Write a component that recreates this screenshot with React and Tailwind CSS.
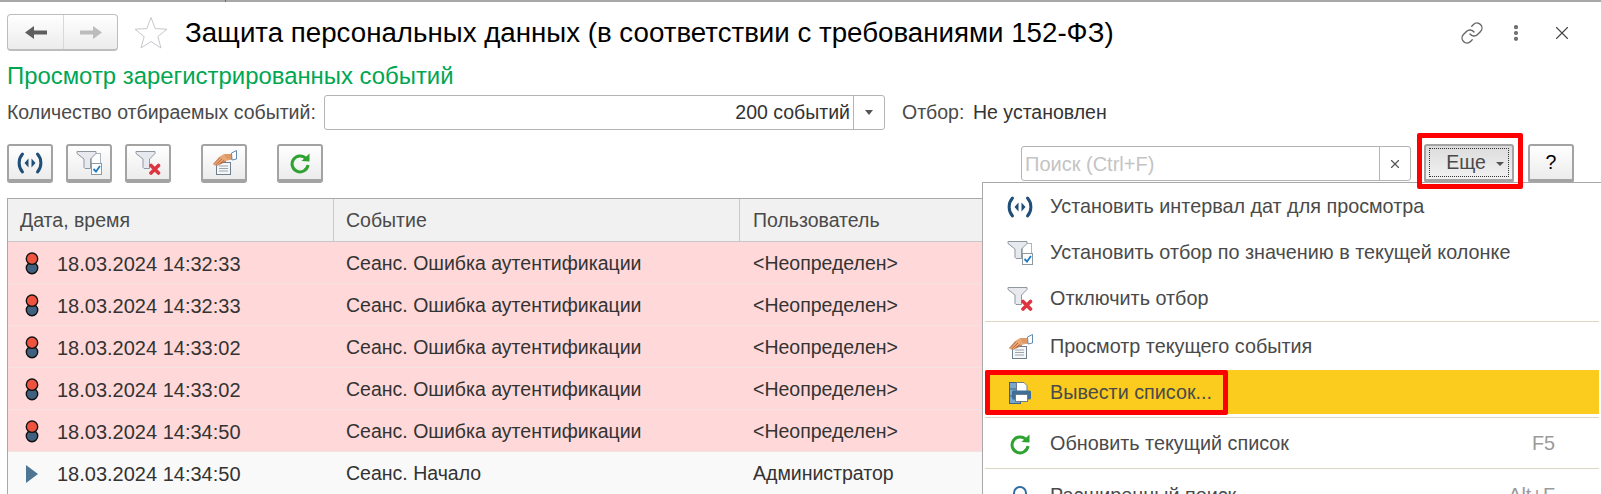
import { X, Link, EllipsisVertical } from 'lucide-react';

const rows = [
  { time: '18.03.2024 14:32:33', event: 'Сеанс. Ошибка аутентификации', user: '<Неопределен>', bad: true },
  { time: '18.03.2024 14:32:33', event: 'Сеанс. Ошибка аутентификации', user: '<Неопределен>', bad: true },
  { time: '18.03.2024 14:33:02', event: 'Сеанс. Ошибка аутентификации', user: '<Неопределен>', bad: true },
  { time: '18.03.2024 14:33:02', event: 'Сеанс. Ошибка аутентификации', user: '<Неопределен>', bad: true },
  { time: '18.03.2024 14:34:50', event: 'Сеанс. Ошибка аутентификации', user: '<Неопределен>', bad: true },
  { time: '18.03.2024 14:34:50', event: 'Сеанс. Начало', user: 'Администратор', bad: false },
];

const IntervalIcon = () => (
  <svg width="26" height="26" viewBox="0 0 26 26" fill="none">
    <path d="M5.5 4 C1 9 1 17 5.5 22" stroke="#1f4e79" strokeWidth="3" strokeLinecap="round" />
    <path d="M20.5 4 C25 9 25 17 20.5 22" stroke="#1f4e79" strokeWidth="3" strokeLinecap="round" />
    <path d="M11.5 8.5 V17.5 L7.5 13 Z" fill="#1f4e79" />
    <path d="M14.5 8.5 V17.5 L18.5 13 Z" fill="#1f4e79" />
  </svg>
);

const Funnel = () => (
  <path d="M1 1.5 H20 V3.5 L14.5 9 V18.5 H9 L8 17.5 V9 L1 3.5 Z" fill="#e6eaee" stroke="#8f979f" />
);

const FunnelCheckIcon = () => (
  <svg width="26" height="26" viewBox="0 0 26 26" fill="none">
    <rect x="15.5" y="3.5" width="9" height="10" fill="#fff" stroke="#b0b5ba" />
    <Funnel />
    <rect x="15.5" y="13.5" width="10" height="11" fill="#fff" stroke="#8f979f" />
    <path d="M17.5 19 L20 21.5 L24 16" stroke="#1d7cc4" strokeWidth="1.8" />
  </svg>
);

const FunnelCrossIcon = () => (
  <svg width="26" height="26" viewBox="0 0 26 26" fill="none">
    <Funnel />
    <path d="M16 15.5 L23.5 23 M23.5 15.5 L16 23" stroke="#dc3540" strokeWidth="3.6" strokeLinecap="round" />
  </svg>
);

const HandDocIcon = () => (
  <svg width="26" height="26" viewBox="0 0 26 26" fill="none">
    <rect x="5.5" y="12.5" width="14" height="12" fill="#f4f6f8" stroke="#6f7f8f" />
    <path d="M8 16 H17 M8 18.5 H17 M8 21 H17" stroke="#9aa5b0" />
    <path d="M2 15 L8 7 L13 4 L20 4 L21 9.5 L14 11 L9 14 L5 15.5 Z" fill="#e8a878" />
    <path d="M2.5 14 L9 7.5 M4.5 15 L11 9 M6.5 15.5 L13 10.5 M9 14 L15 11" stroke="#b5673a" strokeWidth="1" />
    <path d="M13 4 L20 4 L21 9.5 L16 9 Z" fill="#dd9a68" />
    <path d="M20.5 3 L25.5 0.5 V9 L21 10 Z" fill="#fff" stroke="#4f7ea8" strokeWidth="0.9" />
  </svg>
);

const RefreshIcon = () => (
  <svg width="24" height="24" viewBox="0 0 24 24" fill="none">
    <path d="M18 7.5 A8 8 0 1 0 20 14" stroke="#2fa332" strokeWidth="3" />
    <path d="M13.5 10 L21.5 10.5 V2.5 Z" fill="#2fa332" />
  </svg>
);

const PrintIcon = () => (
  <svg width="22" height="22" viewBox="0 0 22 22" fill="none">
    <rect x="0.5" y="0.5" width="11" height="21" fill="#78a6cc" stroke="#3c6488" />
    <path d="M0.5 7 H11 M0.5 14 H11" stroke="#3c6488" />
    <path d="M7.5 0.5 H15 L18 3.5 V10 H7.5 Z" fill="#fff" stroke="#6d7c8a" />
    <rect x="3" y="8.5" width="19" height="9" rx="1.5" fill="#3f6f96" />
    <rect x="6.5" y="12.5" width="12" height="7" fill="#fff" stroke="#6d7c8a" />
  </svg>
);

const SearchIcon = () => (
  <svg width="20" height="24" viewBox="0 0 20 24" fill="none">
    <circle cx="10" cy="9" r="6" stroke="#2f6da3" strokeWidth="2" />
    <path d="M13.5 14 L17 20" stroke="#2f6da3" strokeWidth="2.5" />
  </svg>
);

const Lamp = () => (
  <svg width="14" height="23" viewBox="0 0 14 23">
    <circle cx="7" cy="16" r="5.7" fill="#3f617f" stroke="#111" strokeWidth="1.4" />
    <circle cx="7" cy="6.7" r="5.7" fill="#ee5340" stroke="#111" strokeWidth="1.4" />
  </svg>
);

const ToolButton = ({ children, className = '' }) => (
  <button className={`w-[46px] h-[39px] flex-none flex items-center justify-center rounded-[3px] border-2 border-b-4 border-[#a3a3a3] bg-gradient-to-b from-white to-[#ececec] ${className}`}>
    {children}
  </button>
);

const MenuItem = ({ icon, label, hotkey, active, height }) => (
  <div className={`${height} flex-none flex items-center pl-[22px] pr-[44px] pt-[2px] ${active ? 'bg-[#fbcc1e]' : ''}`}>
    <div className="w-[26px] flex justify-center">{icon}</div>
    <span className="ml-[17px] text-[19.8px] text-[#4a4a4a]">{label}</span>
    {hotkey && <span className="ml-auto text-[19.8px] text-[#9a9a9a]">{hotkey}</span>}
  </div>
);

const Divider = () => <div className="h-px flex-none bg-[#d9d6c3]" />;

export default function App() {
  return (
    <div className="relative h-[494px] w-[1601px] overflow-hidden bg-white font-['Liberation_Sans',Arial,sans-serif] text-[19.5px] text-[#4a4a4a]">
      <div className="h-[2px] bg-[#a8a8a8]">
        <div className="h-[2px] w-[226px] border-r border-[#666]" />
      </div>

      {/* Header */}
      <div className="flex items-center h-[37px] mt-[12px] pl-[7px]">
        <div className="flex h-[37px] w-[111px] rounded-[4px] border border-[#bdbdbd] border-b-2 bg-gradient-to-b from-white to-[#ececec]">
          <div className="w-[56px] flex items-center justify-center border-r border-[#d8d8d8]">
            <svg width="22" height="13" viewBox="0 0 22 13"><path d="M0 6.5 L9 0 V4.5 H22 V8.5 H9 V13 Z" fill="#5e5e5e" /></svg>
          </div>
          <div className="flex-1 flex items-center justify-center">
            <svg width="22" height="13" viewBox="0 0 22 13"><path d="M22 6.5 L13 0 V4.5 H0 V8.5 H13 V13 Z" fill="#bcbcbc" /></svg>
          </div>
        </div>
        <svg className="ml-[15px]" width="36" height="34" viewBox="0 0 36 34" fill="#fff" stroke="#c4c8cc">
          <path d="M18 1.5 L22.2 12.6 L34 13.2 L24.8 20.6 L28 32 L18 25.5 L8 32 L11.2 20.6 L2 13.2 L13.8 12.6 Z" />
        </svg>
        <h1 className="ml-[16px] text-[27.7px] text-black whitespace-nowrap">Защита персональных данных (в соответствии с требованиями 152-ФЗ)</h1>
        <div className="ml-auto flex items-center pr-[28px] text-[#666]">
          <Link size={24} strokeWidth={1.4} className="mr-[22px]" />
          <EllipsisVertical size={20} strokeWidth={3} className="mr-[25px]" />
          <X size={22} strokeWidth={1.2} className="text-[#444]" />
        </div>
      </div>

      <div className="mt-[12px] pl-[7px] text-[23.9px] leading-[26px] text-[#00a651]">Просмотр зарегистрированных событий</div>

      {/* Filter row */}
      <div className="flex items-center h-[35px] mt-[6px] pl-[7px]">
        <span className="w-[317px] flex-none whitespace-nowrap">Количество отбираемых событий:</span>
        <div className="flex h-[35px] w-[561px] rounded-[3px] border border-[#b4b4b4]">
          <div className="flex-1 flex items-center justify-end pr-[3px] text-[#333]">200 событий</div>
          <div className="w-[31px] flex items-center justify-center border-l border-[#b4b4b4]">
            <div className="border-x-[4px] border-t-[5px] border-x-transparent border-t-[#555]" />
          </div>
        </div>
        <span className="ml-[17px] w-[71px] flex-none">Отбор:</span>
        <span className="text-[#333]">Не установлен</span>
      </div>

      {/* Toolbar */}
      <div className="flex items-center h-[39px] mt-[14px] pl-[7px]">
        <ToolButton><IntervalIcon /></ToolButton>
        <ToolButton className="ml-[13px]"><FunnelCheckIcon /></ToolButton>
        <ToolButton className="ml-[13px]"><FunnelCrossIcon /></ToolButton>
        <ToolButton className="ml-[30px]"><HandDocIcon /></ToolButton>
        <ToolButton className="ml-[30px]"><RefreshIcon /></ToolButton>
        <div className="ml-[698px] flex h-[35px] w-[390px] rounded-[3px] border border-[#b4b4b4]">
          <div className="flex-1 flex items-center pl-[3px] text-[20px] text-[#c4c4c4]">Поиск (Ctrl+F)</div>
          <div className="w-[31px] flex items-center justify-center border-l border-[#b4b4b4]">
            <X size={14} strokeWidth={2} className="text-[#555]" />
          </div>
        </div>
        <button className="ml-[13px] flex-none h-[39px] w-[90px] flex items-center justify-center rounded-[3px] border-2 border-b-4 border-[#a3a3a3] bg-gradient-to-b from-[#dcdcdc] to-[#f2f2f2]">
          <span className="flex h-[29px] w-[80px] items-center justify-center gap-[10px] pl-[12px] border border-dotted border-[#333]">
            Еще
            <span className="border-x-[4px] border-t-[4px] border-x-transparent border-t-[#555] mt-[2px]" />
          </span>
        </button>
        <ToolButton className="ml-[14px] w-[44px] text-black">?</ToolButton>
      </div>

      {/* Table */}
      <div className="mt-[15px] ml-[7px] border-t border-l border-[#a8a8a8]">
        <div className="flex h-[43px] pb-0 bg-[#f1f1f1] border-b border-[#c8c8c8]">
          <div className="w-[326px] flex items-center pl-[12px] pt-[1px] border-r border-[#c8c8c8]">Дата, время</div>
          <div className="w-[406px] flex items-center pl-[12px] pt-[1px] border-r border-[#c8c8c8]">Событие</div>
          <div className="flex-1 flex items-center pl-[13px] pt-[1px]">Пользователь</div>
        </div>
        {rows.map((row, i) => (
          <div key={i} className={`flex h-[42px] items-center pt-[2px] text-[#333] ${row.bad ? 'bg-[#ffd9d9] border-b border-[#f2e2e2]' : 'bg-[#f9f9f9]'}`}>
            <div className="w-[326px] flex items-center pl-[17px]">
              <div className="w-[14px] flex justify-center">
                {row.bad ? <Lamp /> : (
                  <svg width="12" height="18" viewBox="0 0 12 18"><path d="M0 0 L12 9 L0 18 Z" fill="#4f7594" /></svg>
                )}
              </div>
              <span className="ml-[18px] text-[20px]">{row.time}</span>
            </div>
            <div className="w-[406px] pl-[12px]">{row.event}</div>
            <div className="flex-1 pl-[13px]">{row.user}</div>
          </div>
        ))}
      </div>

      {/* Popup menu */}
      <div className="absolute left-[982px] top-[182px] right-0 bottom-0 flex flex-col overflow-hidden bg-white border-t border-l border-[#a8a8a8] pl-[2px] pr-[2px]">
        <MenuItem height="h-[46px]" icon={<IntervalIcon />} label="Установить интервал дат для просмотра" />
        <MenuItem height="h-[46px]" icon={<FunnelCheckIcon />} label="Установить отбор по значению в текущей колонке" />
        <MenuItem height="h-[46px]" icon={<FunnelCrossIcon />} label="Отключить отбор" />
        <Divider />
        <MenuItem height="h-[48px]" icon={<HandDocIcon />} label="Просмотр текущего события" />
        <MenuItem height="h-[44px]" icon={<PrintIcon />} label="Вывести список..." active />
        <div className="h-[3px] flex-none" />
        <Divider />
        <MenuItem height="h-[50px]" icon={<RefreshIcon />} label="Обновить текущий список" hotkey="F5" />
        <Divider />
        <MenuItem height="h-[52px]" icon={<SearchIcon />} label="Расширенный поиск" hotkey="Alt+F" />
      </div>

      {/* Red callouts */}
      <div className="absolute left-[1417px] top-[133px] h-[56px] w-[106px] rounded-[2px] border-[5px] border-[#ff0000] pointer-events-none" />
      <div className="absolute left-[985px] top-[370px] h-[45px] w-[243px] rounded-[2px] border-[5px] border-[#ff0000] pointer-events-none" />
    </div>
  );
}
